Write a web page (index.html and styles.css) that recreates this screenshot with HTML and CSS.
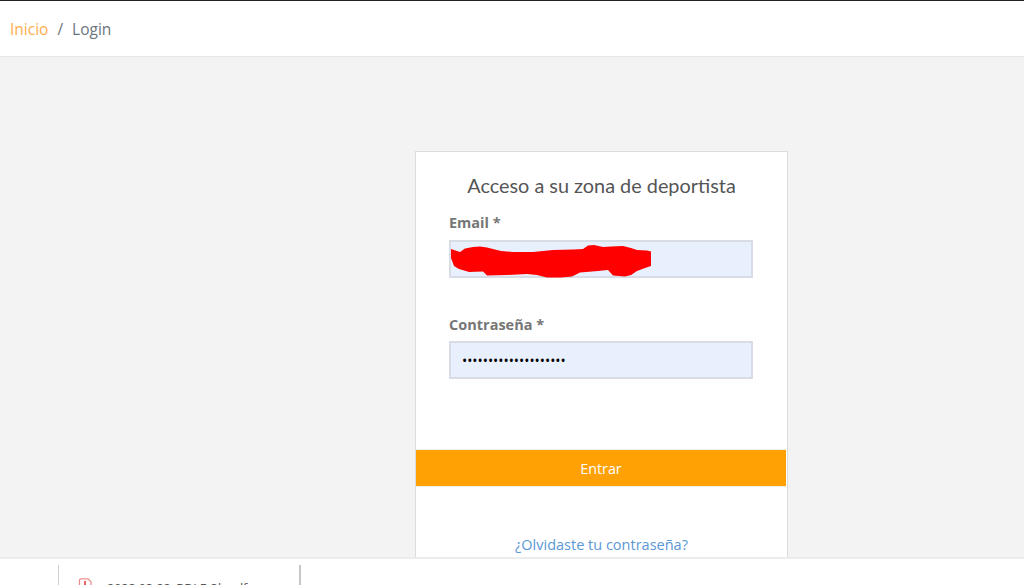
FILE: index.html
```html
<!DOCTYPE html>
<html lang="es">
<head>
<meta charset="utf-8">
<title>Login</title>
<link rel="stylesheet" href="styles.css">
</head>
<body>
<div class="page">
  <nav class="crumbs">
    <a class="crumb-home" href="#">Inicio</a>
    <span class="crumb-sep">/</span>
    <span class="crumb-current">Login</span>
  </nav>
  <main class="main">
    <form class="card">
      <h1 class="title">Acceso a su zona de deportista</h1>
      <div class="field field-email">
        <label class="label" for="email">Email *</label>
        <div class="input-wrap">
          <input class="input" id="email" type="text">
          <svg class="scribble" width="304" height="38" viewBox="0 0 304 38" aria-hidden="true">
            <path fill="#ff0000" d="M2 9 L5 10 L11 12 L16 8.5 L24 7 L31 6.5 L38 7.5 L44 9 L52 11 L64 12 L84 12 L104 10 L124 9.5 L134 9 L139 5.5 L145 5 L154 7 L162 6.5 L174 6 L182 8 L188 10 L198 10.5 L202 11.5 L202 26 L196 28 L188 31 L182 35 L176 36.5 L164 35.5 L159 30 L149 31 L131 32.5 L123 36.5 L112 37.5 L98 37.5 L88 35 L78 34 L58 35 L38 35.5 L34 31.5 L20 32 L10 29 L5 26 L2 18 Z"/>
          </svg>
        </div>
      </div>
      <div class="field field-password">
        <label class="label" for="password">Contraseña *</label>
        <input class="input input-pass" id="password" type="password" value="aaaaaaaaaaaaaaaaaaaa">
      </div>
      <button class="submit" type="button">Entrar</button>
      <a class="forgot" href="#">¿Olvidaste tu contraseña?</a>
    </form>
  </main>
  <footer class="shelf">
    <div class="download">
      <svg class="pdf-icon" width="14" height="20" viewBox="0 0 14 20" aria-hidden="true">
        <path fill="#fff" stroke="#ee8f8f" stroke-width="1.3" d="M1.5 2.5 Q1.5 .8 3 .8 H10 L13 4 V19 H1.5 Z"/>
        <path stroke="#e03b3b" stroke-width="1.6" d="M7 3 V7"/>
      </svg>
      <span class="download-name">2022 03 22_BDLE-3k.pdf</span>
    </div>
  </footer>
</div>
</body>
</html>
```
FILE: styles.css
```css
* { box-sizing: border-box; }
html, body { margin: 0; padding: 0; height: 100%; overflow: hidden; }
body { font-family: "Open Sans", sans-serif; background: #f3f3f3; }
.page { height: 585px; display: flex; flex-direction: column; border-top: 1px solid #222; }
.crumbs {
  height: 56px; flex: none; display: flex; align-items: center; gap: 9px;
  padding-left: 10px; padding-top: 1px; background: #fff; border-bottom: 1px solid #e6e6e6;
  font-size: 15.5px;
}
.crumb-home { color: #ffad4f; text-decoration: none; }
.crumb-sep, .crumb-current { color: #6c757d; }
.main { flex: 1; min-height: 0; overflow: hidden; padding: 94px 237px 0 415px; }
.card {
  width: 373px; height: 460px; background: #fff; border: 1px solid #dcdcdc;
  display: flex; flex-direction: column; align-items: stretch;
}
.title {
  margin: 21px 0 0; text-align: center; font-family: Lato, sans-serif;
  font-weight: 400; font-size: 19.85px; line-height: 24px; color: #555;
}
.field { margin: 0 33px 0 33px; }
.field-email { margin-top: 15px; }
.field-password { margin-top: 36px; }
.label { display: block; height: 28px; font-size: 14.5px; line-height: 22px; font-weight: 700; color: #767676; }
.field-password .label { height: 27px; }
.input-wrap { position: relative; height: 38px; }
.input {
  display: block; width: 304px; height: 38px; margin: 0; padding: 0 12px 0 11px;
  background: #e8f0fe; border: 2px solid #d8dde5; outline: none;
  font-family: "Open Sans", sans-serif; font-size: 13.8px; color: #000;
}
.scribble { position: absolute; left: 0; top: 0; }
.input-pass { letter-spacing: 0; }
.submit {
  display: block; width: 370px; height: 38px; margin: 70px 0 0; padding: 1px 0 0;
  background: #ffa105; border: 1px solid #f0f0f0; border-left: 0; border-right: 0;
  color: #fff; font-family: "Open Sans", sans-serif; font-size: 14.3px;
}
.forgot { margin-top: 48px; text-align: center; color: #5b97d5; font-size: 14.5px; line-height: 20px; text-decoration: none; }
.shelf {
  height: 28px; flex: none; background: #fff; border-top: 2px solid #ececec;
  padding: 6px 0 0 58px; overflow: hidden;
}
.download {
  width: 243px; height: 40px; border-left: 1px solid #cfcfcf; border-right: 2px solid #c8c8c8;
  display: flex; gap: 15px; padding: 13px 0 0 19px;
}
.pdf-icon { flex: none; }
.download-name { font-size: 12.5px; line-height: 16px; color: #555; padding-top: 3px; }
```
